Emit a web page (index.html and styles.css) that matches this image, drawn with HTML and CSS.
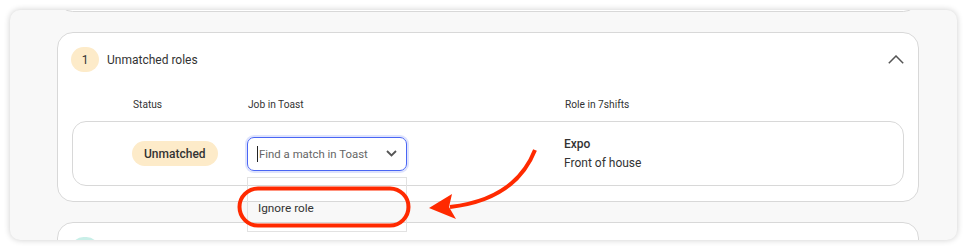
FILE: index.html
```html
<!DOCTYPE html>
<html lang="en">
<head>
<meta charset="utf-8">
<title>Role mapping</title>
<link rel="stylesheet" href="styles.css">
</head>
<body>
<div class="frame">
  <div class="scroll">
    <section class="card card-top"></section>
    <section class="card group">
      <header class="group-head">
        <span class="count count-warn">1</span>
        <span class="group-title">Unmatched roles</span>
        <svg class="collapse" width="16" height="9" viewBox="0 0 16 9"><polyline points="0.8,8.2 8,1 15.2,8.2" fill="none" stroke="#555" stroke-width="1.5"/></svg>
      </header>
      <div class="cols">
        <span>Status</span>
        <span>Job in Toast</span>
        <span>Role in 7shifts</span>
      </div>
      <div class="row">
        <div><span class="pill">Unmatched</span></div>
        <div class="select-wrap">
          <div class="select">
            <span class="caret"></span>
            <span class="placeholder">Find a match in Toast</span>
            <svg class="chev" width="11" height="7" viewBox="0 0 11 7"><polyline points="1,1 5.5,5.5 10,1" fill="none" stroke="#555" stroke-width="1.8"/></svg>
          </div>
          <ul class="menu"><li class="menu-item">Ignore role</li></ul>
        </div>
        <div class="role">
          <div class="role-name">Expo</div>
          <div class="role-dept">Front of house</div>
        </div>
      </div>
    </section>
    <section class="card group">
      <header class="group-head">
        <span class="count count-ok"></span>
      </header>
    </section>
  </div>
</div>
<svg class="annotation" width="967" height="250" viewBox="0 0 967 250">
  <rect x="239.5" y="188.5" width="169" height="37" rx="18.5" fill="none" stroke="#ff2a00" stroke-width="4"/>
  <path d="M535,150 C522,183 494,202 450,207" fill="none" stroke="#ff2a00" stroke-width="4"/>
  <polygon points="429,208 452,194 449,207 456,219" fill="#ff2a00"/>
</svg>
</body>
</html>
```
FILE: styles.css
```css
* { box-sizing: border-box; }
html, body { margin: 0; padding: 0; background: #fff; }
body {
  font-family: Roboto, "Noto Sans", sans-serif;
  color: #333;
  position: relative;
  width: 967px;
  height: 250px;
  overflow: hidden;
}
.frame {
  margin: 10px;
  width: 947px;
  height: 230px;
  background: #f8f8f8;
  border-radius: 10px;
  box-shadow: 0 0 6px rgba(0, 0, 0, 0.2);
  overflow: hidden;
}
.scroll {
  padding: 0 38px 0 47px;
}
.card {
  background: #fff;
  border: 1px solid #d8d8d8;
  border-radius: 16px;
}
.card-top {
  margin-top: -29px;
  height: 31px;
}
.group {
  margin-top: 20px;
  padding: 14px 14px 15px 14px;
}
.group-head {
  display: flex;
  align-items: center;
  height: 25px;
  margin-left: -1px;
}
.count {
  width: 28px;
  height: 25px;
  border-radius: 13px;
  display: flex;
  align-items: center;
  justify-content: center;
  font-size: 12px;
  color: #333;
}
.count-warn { background: #fdebc9; }
.count-ok { background: #c9efe8; }
.group-title {
  margin-left: 8px;
  font-size: 12px;
  color: #333;
}
.collapse { margin-left: auto; }
.cols {
  margin-top: 26px;
  height: 14px;
  display: grid;
  grid-template-columns: 115px 317px 1fr;
  padding-left: 61px;
  font-size: 10.2px;
  line-height: 14px;
  color: #333;
}
.row {
  margin-top: 9px;
  height: 65px;
  border: 1px solid #d8d8d8;
  border-radius: 14px;
  display: grid;
  grid-template-columns: 115px 317px 1fr;
  align-items: center;
  padding-left: 59px;
}
.pill {
  display: inline-flex;
  align-items: center;
  height: 25px;
  padding: 0 12px;
  border-radius: 13px;
  background: #fdebc9;
  font-size: 12px;
  font-weight: 500;
  color: #333;
}
.select-wrap {
  position: relative;
  width: 160px;
}
.select {
  height: 34px;
  border: 1px solid #4a66f4;
  border-radius: 7px;
  box-shadow: 0 0 0 2px rgba(74, 102, 244, 0.18);
  display: flex;
  align-items: center;
  padding: 0 9px 0 9px;
}
.caret {
  width: 1px;
  height: 16px;
  background: #222;
  margin-right: 1px;
}
.placeholder {
  font-size: 11.4px;
  color: #666;
}
.chev { margin-left: auto; }
.menu {
  position: absolute;
  top: 40px;
  left: 0;
  width: 160px;
  height: 55px;
  margin: 0;
  padding: 0;
  list-style: none;
  border: 1px solid #e2e2e2;
  background: transparent;
  z-index: 5;
}
.menu-item {
  margin-top: 20px;
  height: 20px;
  line-height: 20px;
  padding-left: 10px;
  font-size: 11.8px;
  color: #333;
}
.role-name {
  font-size: 12px;
  font-weight: 500;
  line-height: 19px;
}
.role-dept {
  font-size: 12px;
  line-height: 19px;
}
.annotation {
  position: absolute;
  left: 0;
  top: 0;
  pointer-events: none;
  z-index: 10;
}
```
